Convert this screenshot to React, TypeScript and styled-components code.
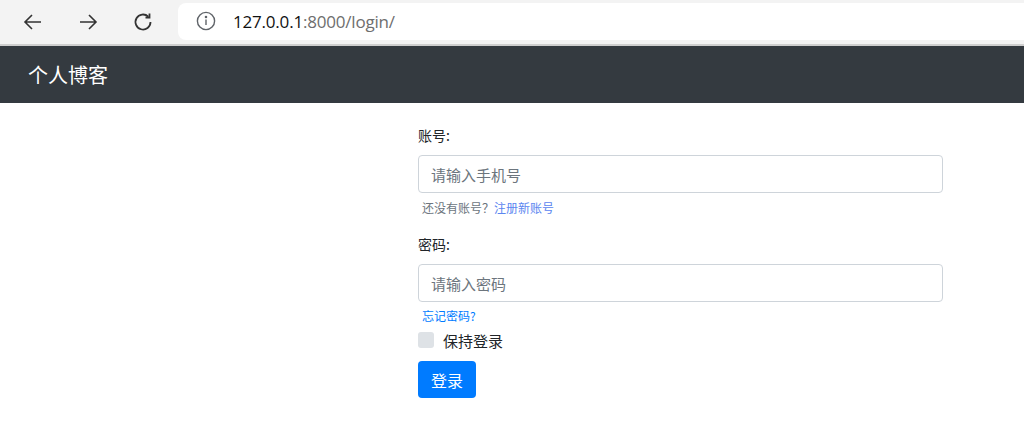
import React from 'react';
import styled, { createGlobalStyle } from 'styled-components';

const GlobalStyle = createGlobalStyle`
  body {
    margin: 0;
    background: #fff;
    font-family: "Liberation Sans", "Noto Sans CJK SC", sans-serif;
  }
`;

const BackIcon = () => (
  <svg width="24" height="24" viewBox="0 0 24 24" fill="none" stroke="#333" strokeWidth="1.6">
    <path d="M20 12H4M11 5l-7 7 7 7" />
  </svg>
);

const ForwardIcon = () => (
  <svg width="24" height="24" viewBox="0 0 24 24" fill="none" stroke="#333" strokeWidth="1.6">
    <path d="M4 12h16M13 5l7 7-7 7" />
  </svg>
);

const ReloadIcon = () => (
  <svg width="24" height="24" viewBox="0 0 24 24" fill="none" stroke="#333" strokeWidth="1.8">
    <path d="M19.5 12a7.5 7.5 0 1 1-2.2-5.3" />
    <path d="M18.5 3.5v4h-4" />
  </svg>
);

const InfoIcon = () => (
  <svg width="20" height="20" viewBox="0 0 20 20" fill="none" stroke="#5f6368" strokeWidth="1.4">
    <circle cx="10" cy="10" r="8.6" />
    <path d="M10 8.5v5.5" />
    <circle cx="10" cy="6" r="0.6" fill="#5f6368" />
  </svg>
);

const App = () => {
  return (
    <>
      <GlobalStyle />
      <Chrome>
        <NavButtons>
          <IconButton><BackIcon /></IconButton>
          <IconButton><ForwardIcon /></IconButton>
          <IconButton><ReloadIcon /></IconButton>
        </NavButtons>
        <AddressBar>
          <InfoIcon />
          <Url>
            127.0.0.1<UrlRest>:8000/login/</UrlRest>
          </Url>
        </AddressBar>
      </Chrome>
      <Navbar>
        <Brand>个人博客</Brand>
      </Navbar>
      <Main>
        <Form>
          <Label>账号:</Label>
          <Input placeholder="请输入手机号" />
          <Help>
            还没有账号？<HelpLink>注册新账号</HelpLink>
          </Help>
          <Label>密码:</Label>
          <Input type="password" placeholder="请输入密码" />
          <Forgot>忘记密码?</Forgot>
          <CheckRow>
            <CheckBox />
            <CheckLabel>保持登录</CheckLabel>
          </CheckRow>
          <SubmitButton>登录</SubmitButton>
        </Form>
      </Main>
    </>
  );
};

export default App;

const Chrome = styled.header`
  display: flex;
  align-items: center;
  height: 44px;
  background: #f3f3f3;
  border-bottom: 2px solid #cfcfcf;
`;

const NavButtons = styled.div`
  display: flex;
  align-items: center;
  gap: 23px;
  padding-left: 17px;
  width: 178px;
  flex-shrink: 0;
  box-sizing: border-box;
`;

const IconButton = styled.div`
  width: 32px;
  height: 32px;
  display: flex;
  align-items: center;
  justify-content: center;
`;

const AddressBar = styled.div`
  flex: 1;
  display: flex;
  align-items: center;
  gap: 17px;
  height: 37px;
  margin-top: -2px;
  padding-left: 18px;
  background: #fff;
  border-radius: 8px 0 0 8px;
`;

const Url = styled.span`
  font-family: "Open Sans", "Liberation Sans", sans-serif;
  font-size: 17px;
  color: #111;
  letter-spacing: -0.2px;
`;

const UrlRest = styled.span`
  color: #6e6e6e;
`;

const Navbar = styled.nav`
  display: flex;
  align-items: center;
  height: 57px;
  padding-left: 28px;
  background: #343a40;
`;

const Brand = styled.span`
  font-family: "Noto Sans CJK SC", sans-serif;
  font-size: 20px;
  color: #fff;
`;

const Main = styled.main`
  padding: 20px 0 0 418px;
`;

const Form = styled.form`
  width: 525px;
  display: flex;
  flex-direction: column;
  font-family: "Noto Sans CJK SC", sans-serif;
`;

const Label = styled.label`
  font-size: 14px;
  color: #212529;
  line-height: 24px;
  margin-bottom: 8px;
`;

const Input = styled.input`
  height: 38px;
  box-sizing: border-box;
  border: 1px solid #ced4da;
  border-radius: 4px;
  padding: 0 12px;
  font-family: "Noto Sans CJK SC", sans-serif;
  font-size: 15px;
  color: #495057;
  outline: none;

  &::placeholder {
    color: #6c757d;
  }
`;

const Help = styled.div`
  font-size: 12px;
  line-height: 20px;
  color: #6c757d;
  margin: 5px 0 14px 4px;
`;

const HelpLink = styled.a`
  color: #5b86f0;
`;

const Forgot = styled.a`
  font-size: 12px;
  line-height: 20px;
  color: #007bff;
  margin: 4px 0 0 4px;
`;

const CheckRow = styled.div`
  display: flex;
  align-items: center;
  gap: 9px;
  height: 24px;
  margin-top: 2px;
`;

const CheckBox = styled.span`
  width: 16px;
  height: 16px;
  border-radius: 3px;
  background: #dee2e6;
`;

const CheckLabel = styled.span`
  font-size: 15px;
  color: #212529;
`;

const SubmitButton = styled.button`
  margin-top: 9px;
  width: 58px;
  height: 37px;
  padding: 0;
  border: none;
  border-radius: 4px;
  background: #007bff;
  color: #fff;
  font-family: "Noto Sans CJK SC", sans-serif;
  font-size: 16px;
  cursor: pointer;
`;
